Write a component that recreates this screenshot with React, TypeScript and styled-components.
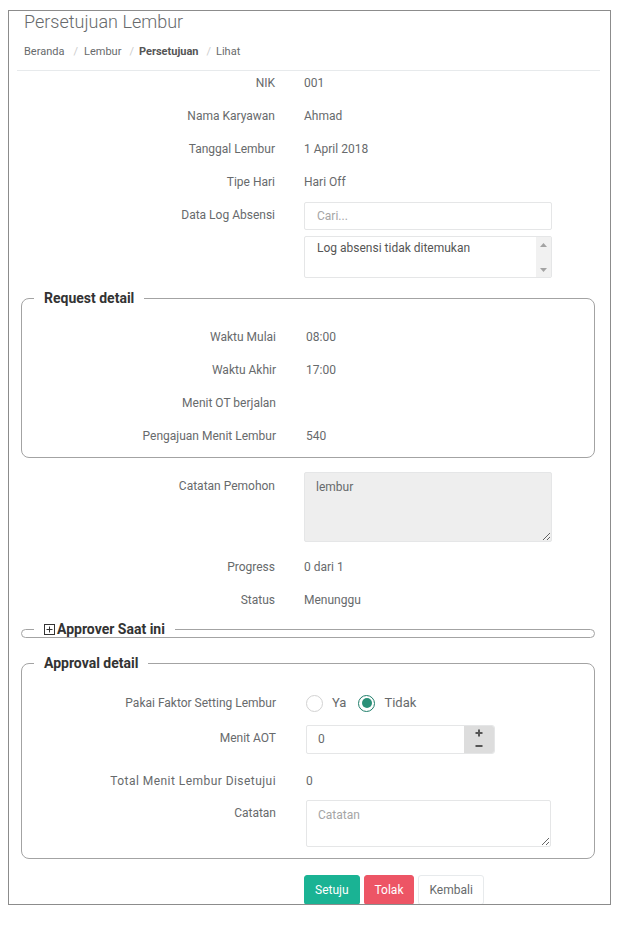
import styled, { createGlobalStyle } from "styled-components";

const GlobalStyle = createGlobalStyle`
  body {
    margin: 0;
    background: #fff;
    font-family: "Roboto", "Liberation Sans", sans-serif;
    font-size: 12px;
    color: #676a6c;
  }
  * { box-sizing: border-box; }
`;

const Box = styled.div`
  margin: 10px 0 0 8px;
  width: 603px;
  height: 895px;
  border: 1px solid #8c8c8c;
  padding: 0 10px 0 8px;
  overflow: hidden;
`;

const Header = styled.div`
  padding-left: 7px;
`;

const Title = styled.h2`
  margin: 0;
  font-size: 18px;
  font-weight: 300;
  line-height: 22px;
  color: #676a6c;
`;

const Crumbs = styled.ol`
  display: flex;
  list-style: none;
  margin: 11px 0 10px;
  padding: 0;
  font-size: 11px;
  line-height: 16px;
`;

const Crumb = styled.li<{ $active?: boolean }>`
  font-weight: ${(p) => (p.$active ? 700 : 400)};
  color: ${(p) => (p.$active ? "#555" : "#676a6c")};
  &:not(:first-child)::before {
    content: "/";
    color: #ccc;
    padding: 0 5px 0 8px;
    font-weight: 400;
  }
  &:nth-child(2)::before {
    padding: 0 6px 0 9px;
  }
`;

const Content = styled.div`
  border-top: 1px solid #e7eaec;
  padding-top: 3px;
`;

const Row = styled.div<{ $mt?: number; $label?: number; $col?: number }>`
  display: grid;
  grid-template-columns: ${(p) => p.$label ?? 258}px 1fr;
  column-gap: ${(p) => p.$col ?? 29}px;
  margin-top: ${(p) => p.$mt ?? 15}px;
  line-height: 18px;
`;

const Label = styled.div<{ $pt?: number; $wide?: boolean }>`
  text-align: right;
  padding-top: ${(p) => p.$pt ?? 0}px;
  white-space: nowrap;
  letter-spacing: ${(p) => (p.$wide ? "0.45px" : "normal")};
`;

const Value = styled.div`
  display: flex;
  flex-direction: column;
  align-items: flex-start;
  gap: 6px;
`;

const Input = styled.input<{ $w?: number }>`
  width: ${(p) => p.$w ?? 248}px;
  height: 28px;
  border: 1px solid #e5e6e7;
  border-radius: 2px;
  padding: 0 12px;
  font: inherit;
  color: #676a6c;
  outline: none;
  &::placeholder { color: #a5a5a5; }
`;

const TextArea = styled.textarea<{ $w: number; $h: number; $bg?: string }>`
  width: ${(p) => p.$w}px;
  height: ${(p) => p.$h}px;
  border: 1px solid #e5e6e7;
  border-radius: 2px;
  background: ${(p) => p.$bg ?? "#fff"};
  padding: 5px 11px;
  font: inherit;
  line-height: 18px;
  color: #676a6c;
  outline: none;
  &::placeholder { color: #a5a5a5; }
`;

const ListBox = styled.div`
  width: 248px;
  height: 42px;
  border: 1px solid #e5e6e7;
  border-radius: 2px;
  display: flex;
`;

const ListText = styled.div`
  flex: 1;
  padding: 2px 12px;
  color: #555;
`;

const ScrollBar = styled.div`
  width: 15px;
  background: #f1f1f1;
  display: flex;
  flex-direction: column;
  justify-content: space-between;
  align-items: center;
  padding: 6px 0 5px;
`;

const Fieldset = styled.fieldset<{ $mt: number; $pb: number }>`
  margin: ${(p) => p.$mt}px 5px 0 4px;
  border: 1px solid #a3a3a3;
  border-radius: 8px;
  padding: 0 12px ${(p) => p.$pb}px;
  min-width: 0;
`;

const Legend = styled.legend<{ $lh?: number }>`
  padding: 0 10px;
  font-size: 14px;
  font-weight: 700;
  color: #333;
  line-height: ${(p) => p.$lh ?? 18}px;
  display: flex;
  align-items: center;
  gap: 2px;
`;

const Radios = styled.div`
  display: flex;
  align-items: center;
  font-size: 13px;
  height: 18px;
`;

const RadioDot = styled.span<{ $checked?: boolean }>`
  width: 17px;
  height: 17px;
  border-radius: 50%;
  border: ${(p) => (p.$checked ? "1.5px solid #1f7e6a" : "1px solid #d2d2d2")};
  background: #fff;
  display: flex;
  align-items: center;
  justify-content: center;
  margin-right: 9px;
  &::after {
    content: "";
    display: ${(p) => (p.$checked ? "block" : "none")};
    width: 10px;
    height: 10px;
    border-radius: 50%;
    background: #2a9078;
  }
`;

const RadioText = styled.span`
  margin-right: 12px;
`;

const Spinner = styled.div`
  display: flex;
  width: 189px;
  height: 29px;
  border: 1px solid #e5e6e7;
  border-radius: 2px 3px 3px 2px;
  overflow: hidden;
`;

const SpinValue = styled.div`
  flex: 1;
  padding: 0 11px;
  line-height: 27px;
`;

const SpinButtons = styled.div`
  width: 30px;
  background: #ddd;
  display: flex;
  flex-direction: column;
  align-items: center;
  justify-content: space-around;
  padding: 1px 0;
`;

const Actions = styled.div`
  display: flex;
  gap: 4px;
`;

const Button = styled.button<{ $bg: string; $fg: string; $bd: string }>`
  height: 30px;
  padding: 0 10px;
  border: 1px solid ${(p) => p.$bd};
  border-radius: 3px;
  background: ${(p) => p.$bg};
  color: ${(p) => p.$fg};
  font: inherit;
  font-size: 12px;
  line-height: 28px;
`;

const PlusBox = () => (
  <svg width="11" height="11" viewBox="0 0 11 11">
    <rect x="0.5" y="0.5" width="10" height="10" fill="none" stroke="#333" />
    <path d="M5.5 2.5v6M2.5 5.5h6" stroke="#333" />
  </svg>
);

const Arrow = ({ up }: { up?: boolean }) => (
  <svg width="7" height="4" viewBox="0 0 7 4">
    <path d={up ? "M0 4L3.5 0L7 4Z" : "M0 0L3.5 4L7 0Z"} fill="#a3a3a3" />
  </svg>
);

const SpinGlyph = ({ plus }: { plus?: boolean }) => (
  <svg width="8" height="8" viewBox="0 0 8 8">
    <path d={plus ? "M4 0.5v7M0.5 4h7" : "M0.5 4h7"} stroke="#555" strokeWidth="2" />
  </svg>
);

const inner = { $label: 242, $col: 30 };

export default function App() {
  return (
    <>
      <GlobalStyle />
      <Box>
        <Header>
          <Title>Persetujuan Lembur</Title>
          <Crumbs>
            <Crumb>Beranda</Crumb>
            <Crumb>Lembur</Crumb>
            <Crumb $active>Persetujuan</Crumb>
            <Crumb>Lihat</Crumb>
          </Crumbs>
        </Header>
        <Content>
          <Row $mt={0}>
            <Label>NIK</Label>
            <div>001</div>
          </Row>
          <Row>
            <Label>Nama Karyawan</Label>
            <div>Ahmad</div>
          </Row>
          <Row>
            <Label>Tanggal Lembur</Label>
            <div>1 April 2018</div>
          </Row>
          <Row>
            <Label>Tipe Hari</Label>
            <div>Hari Off</div>
          </Row>
          <Row $mt={11}>
            <Label $pt={4}>Data Log Absensi</Label>
            <Value>
              <Input placeholder="Cari..." />
              <ListBox>
                <ListText>Log absensi tidak ditemukan</ListText>
                <ScrollBar>
                  <Arrow up />
                  <Arrow />
                </ScrollBar>
              </ListBox>
            </Value>
          </Row>

          <Fieldset $mt={11} $pb={12}>
            <Legend>Request detail</Legend>
            <Row {...inner} $mt={21}>
              <Label>Waktu Mulai</Label>
              <div>08:00</div>
            </Row>
            <Row {...inner}>
              <Label>Waktu Akhir</Label>
              <div>17:00</div>
            </Row>
            <Row {...inner}>
              <Label>Menit OT berjalan</Label>
              <div></div>
            </Row>
            <Row {...inner}>
              <Label>Pengajuan Menit Lembur</Label>
              <div>540</div>
            </Row>
          </Fieldset>

          <Row $mt={14}>
            <Label $pt={5}>Catatan Pemohon</Label>
            <Value>
              <TextArea $w={248} $h={70} $bg="#eee" readOnly defaultValue="lembur" />
            </Value>
          </Row>
          <Row $mt={16}>
            <Label>Progress</Label>
            <div>0 dari 1</div>
          </Row>
          <Row>
            <Label>Status</Label>
            <div>Menunggu</div>
          </Row>

          <Fieldset $mt={12} $pb={0}>
            <Legend $lh={16}>
              <PlusBox />
              Approver Saat ini
            </Legend>
          </Fieldset>

          <Fieldset $mt={16} $pb={11}>
            <Legend>Approval detail</Legend>
            <Row {...inner} $mt={22}>
              <Label>Pakai Faktor Setting Lembur</Label>
              <Radios>
                <RadioDot />
                <RadioText>Ya</RadioText>
                <RadioDot $checked />
                <RadioText>Tidak</RadioText>
              </Radios>
            </Row>
            <Row {...inner} $mt={13}>
              <Label $pt={4}>Menit AOT</Label>
              <Spinner>
                <SpinValue>0</SpinValue>
                <SpinButtons>
                  <SpinGlyph plus />
                  <SpinGlyph />
                </SpinButtons>
              </Spinner>
            </Row>
            <Row {...inner} $mt={18}>
              <Label $wide>Total Menit Lembur Disetujui</Label>
              <div>0</div>
            </Row>
            <Row {...inner} $mt={10}>
              <Label $pt={4}>Catatan</Label>
              <Value>
                <TextArea $w={245} $h={47} placeholder="Catatan" />
              </Value>
            </Row>
          </Fieldset>

          <Row $mt={16}>
            <div />
            <Actions>
              <Button $bg="#1ab394" $fg="#fff" $bd="#1ab394">Setuju</Button>
              <Button $bg="#ed5565" $fg="#fff" $bd="#ed5565">Tolak</Button>
              <Button $bg="#fff" $fg="#676a6c" $bd="#e7eaec">Kembali</Button>
            </Actions>
          </Row>
        </Content>
      </Box>
    </>
  );
}
